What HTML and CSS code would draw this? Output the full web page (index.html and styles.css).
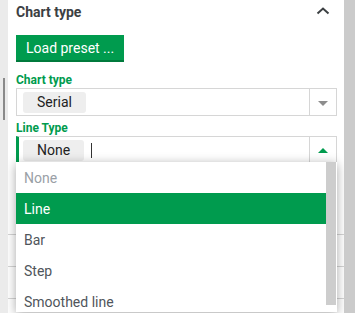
FILE: index.html
```html
<!DOCTYPE html>
<html lang="en">
<head>
  <meta charset="UTF-8" />
  <meta name="viewport" content="width=device-width, initial-scale=1.0" />
  <title>Chart type</title>
  <link rel="stylesheet" href="styles.css">
</head>
<body>
  <div class="gutter">
    <span class="handle"></span>
  </div>
  <div class="panel">
    <div class="panel-head">
      <h2>Chart type</h2>
      <svg class="chevron" width="14" height="8" viewBox="0 0 14 8">
        <polyline points="1.5,6.5 7,1.5 12.5,6.5" fill="none" stroke="#3c4043" stroke-width="2"/>
      </svg>
    </div>
    <button class="btn-preset">Load preset ...</button>

    <label class="field-label">Chart type</label>
    <div class="select">
      <div class="select-value">
        <span class="chip">Serial</span>
      </div>
      <div class="select-arrow">
        <span class="tri-down"></span>
      </div>
    </div>

    <label class="field-label second">Line Type</label>
    <div class="select open">
      <div class="select-value">
        <span class="chip">None</span>
        <span class="caret"></span>
      </div>
      <div class="select-arrow">
        <span class="tri-up"></span>
      </div>
      <div class="dropdown">
        <ul class="options">
          <li class="placeholder">None</li>
          <li class="selected">Line</li>
          <li>Bar</li>
          <li>Step</li>
          <li>Smoothed line</li>
        </ul>
        <div class="track"><div class="thumb"></div></div>
      </div>
    </div>

    <!-- rows sitting under the open dropdown -->
    <div class="rows">
      <div class="row"></div>
      <div class="row"></div>
      <div class="row"></div>
    </div>
  </div>
  <div class="side"></div>
</body>
</html>
```
FILE: styles.css
```css
/* Global Styles */
html {
  overflow: hidden;
}
body {
  margin: 0;
  padding: 0;
  font-family: Roboto, "Noto Sans", Arial, sans-serif;
  display: flex;
  height: 313px;
  overflow: hidden;
  background-color: #fff;
}
.gutter {
  width: 8px;
  background-color: #ebebeb;
  flex-shrink: 0;
}
.handle {
  display: block;
  width: 2px;
  height: 42px;
  margin: 78px 0 0 3px;
  background-color: #8a8a8a;
}
.side {
  width: 11px;
  background-color: #cbcbcb;
  flex-shrink: 0;
}
.panel {
  width: 336px;
  height: 313px;
  flex-shrink: 0;
  background-color: #fff;
  padding-left: 8px;
  box-sizing: border-box;
  overflow: hidden;
}

/* Header */
.panel-head {
  display: flex;
  justify-content: space-between;
  align-items: center;
  height: 24px;
  padding-right: 14px;
}
.panel-head h2 {
  margin: 0;
  font-size: 14px;
  line-height: 20px;
  font-weight: bold;
  color: #3c4043;
}
.chevron {
  margin-top: -3px;
}

/* Button */
.btn-preset {
  display: block;
  margin-top: 11px;
  height: 27px;
  padding: 0 10px;
  background-color: #009b4e;
  border: none;
  border-bottom: 2px solid #007a3c;
  color: #fff;
  font-family: inherit;
  font-size: 14px;
  cursor: pointer;
}

/* Fields */
.field-label {
  display: block;
  margin-top: 10px;
  font-size: 12px;
  line-height: 16px;
  font-weight: bold;
  color: #009b4e;
}
.field-label.second {
  margin-top: 4px;
}
.select {
  position: relative;
  display: flex;
  width: 321px;
  height: 28px;
  border: 1px solid #d6d6d6;
  box-sizing: border-box;
  background-color: #fff;
}
.select.open {
  border-left: 3px solid #009b4e;
}
.select-value {
  flex: 1;
  display: flex;
  align-items: center;
  padding-left: 6px;
}
.select.open .select-value {
  padding-left: 4px;
}
.chip {
  height: 21px;
  line-height: 21px;
  padding: 0 14px;
  background-color: #eeeeee;
  border-radius: 3px;
  font-size: 14px;
  color: #222;
}
.caret {
  width: 1px;
  height: 15px;
  margin-left: 7px;
  background-color: #333;
}
.select-arrow {
  width: 26px;
  border-left: 1px solid #d6d6d6;
  display: flex;
  align-items: center;
  justify-content: center;
}
.tri-down {
  width: 0;
  height: 0;
  border-left: 5px solid transparent;
  border-right: 5px solid transparent;
  border-top: 5px solid #8d8d8d;
  margin-top: 2px;
}
.tri-up {
  width: 0;
  height: 0;
  border-left: 5px solid transparent;
  border-right: 5px solid transparent;
  border-bottom: 5px solid #009b4e;
}

/* Dropdown */
.dropdown {
  position: absolute;
  top: 25px;
  left: -3px;
  width: 321px;
  height: 150px;
  display: flex;
  background-color: #fff;
  box-shadow: 0 2px 10px rgba(0, 0, 0, 0.35);
  z-index: 2;
  overflow: hidden;
}
.options {
  list-style: none;
  margin: 0;
  padding: 0;
  flex: 1;
}
.options li {
  height: 31px;
  line-height: 32px;
  padding-left: 8px;
  font-size: 14px;
  color: #50555b;
}
.options li.placeholder {
  color: #9aa0a6;
}
.options li.selected {
  background-color: #009b4e;
  color: #fff;
}
.track {
  width: 10px;
  margin-right: 1px;
}
.thumb {
  height: 143px;
  background-color: #cdcdcd;
}

/* Rows under the dropdown */
.rows {
  margin: 70px 0 0 -8px;
}
.row {
  height: 31px;
  border-top: 1px solid #d4d4d4;
}
```
